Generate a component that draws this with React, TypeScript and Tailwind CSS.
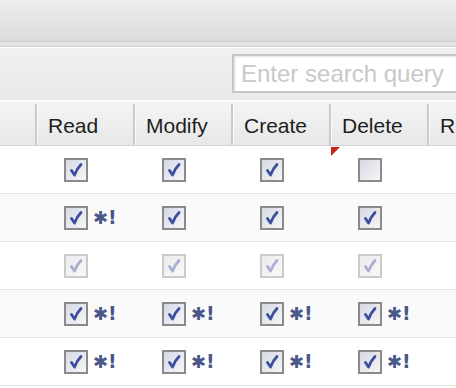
import React from "react"

type Cell = "on" | "off" | "dis" | "star"

const COLS = ["Read", "Modify", "Create", "Delete", "Read"]

const ROWS: { cells: Cell[]; bg: string }[] = [
  { cells: ["on", "on", "on", "off"], bg: "bg-white" },
  { cells: ["star", "on", "on", "on"], bg: "bg-[#fafafa]" },
  { cells: ["dis", "dis", "dis", "dis"], bg: "bg-white" },
  { cells: ["star", "star", "star", "star"], bg: "bg-[#fafafa]" },
  { cells: ["star", "star", "star", "star"], bg: "bg-white" },
]

function Box({ kind }: { kind: Cell }) {
  const disabled = kind === "dis"
  const checked = kind !== "off"
  return (
    <div
      className={`w-[24px] h-[24px] flex items-center justify-center border-2 ${
        disabled ? "border-[#cbcbcb] bg-gradient-to-br from-[#ececee] to-[#f8f8f8]" : "border-[#8a8a8a] bg-gradient-to-br from-[#d6d9e2] to-[#f6f6f8]"
      }`}
    >
      {checked && (
        <svg width="16" height="16" viewBox="0 0 16 16">
          <path
            d="M3.5 8.5 L6.5 13 Q9 6.5 13 2.5"
            fill="none"
            stroke={disabled ? "#a9aed2" : "#3b4e9f"}
            strokeWidth="2.8"
            strokeLinecap="round"
            strokeLinejoin="round"
          />
        </svg>
      )}
    </div>
  )
}

export default function App() {
  return (
    <div className="w-[456px] h-[388px] overflow-hidden bg-white font-['Liberation_Sans',Arial,sans-serif]">
      {/* top bar */}
      <div className="h-[42px] bg-gradient-to-b from-[#ededed] to-[#dcdcdc] border-b border-[#cdcdcd]" />
      <div className="h-[5px] bg-[#e5e5e5] border-b border-[#d0d0d0]" />

      {/* toolbar */}
      <div className="h-[54px] border-t border-white border-b border-[#cfcfcf] bg-gradient-to-b from-[#f1f1f1] to-[#e9e9e9] pl-[232px] pt-[6px]">
        <div className="h-[39px] w-[260px] bg-white border-2 border-[#c6c6c6] shadow-[inset_1px_1px_2px_rgba(0,0,0,0.12)] flex items-center pl-[7px]">
          <span className="text-[24px] text-[#c9c9c9] whitespace-nowrap">Enter search query</span>
        </div>
      </div>

      {/* header */}
      <div className="flex h-[45px] border-b border-[#d4d4d4] bg-gradient-to-b from-[#f5f5f5] to-[#e7e7e7] whitespace-nowrap">
        <div className="w-[37px] shrink-0 border-r-2 border-[#cacaca] mt-[3px]" />
        {COLS.map((c, i) => (
          <div
            key={i}
            className="w-[98px] shrink-0 border-r-2 border-[#cacaca] shadow-[inset_1px_0_0_#fbfbfb] mt-[3px] pl-[11px] flex items-center pt-[2px] text-[21px] text-[#1e1e1e] overflow-hidden"
          >
            {c}
          </div>
        ))}
      </div>

      {/* rows */}
      {ROWS.map((r, ri) => (
        <div key={ri} className={`flex h-[48px] border-b border-[#e6e6e6] ${r.bg}`}>
          <div className="w-[37px] shrink-0" />
          {r.cells.map((c, ci) => (
            <div key={ci} className="relative w-[98px] shrink-0 flex items-center pl-[27px] gap-[5px]">
              {ri === 0 && ci === 3 && (
                <svg className="absolute left-0 top-[1px]" width="9" height="9" viewBox="0 0 9 9">
                  <path d="M0 0 H9 L0 9 Z" fill="#c5251d" />
                </svg>
              )}
              <Box kind={c} />
              {c === "star" && (
                <span className="flex items-center text-[#4b5787] font-bold font-['DejaVu_Sans',sans-serif] leading-none">
                  <span className="text-[18px]">✱</span>
                  <span className="text-[19px]">!</span>
                </span>
              )}
            </div>
          ))}
        </div>
      ))}
    </div>
  )
}
